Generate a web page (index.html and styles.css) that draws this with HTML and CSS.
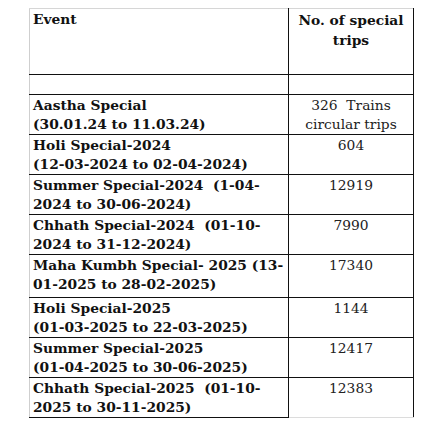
FILE: index.html
```html
<!DOCTYPE html>
<html>
<head>
<meta charset="utf-8">
<link rel="stylesheet" href="styles.css">
</head>
<body>
<table class="trips">
  <colgroup>
    <col class="c-ev">
    <col class="c-num">
  </colgroup>
  <tr class="r-head">
    <td class="ev">Event</td>
    <td class="num head">No. of special<br>trips</td>
  </tr>
  <tr class="r-empty"><td class="ev"></td><td class="num"></td></tr>
  <tr class="r-std">
    <td class="ev">Aastha Special<br>(30.01.24 to 11.03.24)</td>
    <td class="num">326&nbsp; Trains<br>circular trips</td>
  </tr>
  <tr class="r-std">
    <td class="ev">Holi Special-2024<br>(12-03-2024 to 02-04-2024)</td>
    <td class="num">604</td>
  </tr>
  <tr class="r-std">
    <td class="ev">Summer Special-2024&nbsp; (1-04-<br>2024 to 30-06-2024)</td>
    <td class="num">12919</td>
  </tr>
  <tr class="r-std">
    <td class="ev">Chhath Special-2024&nbsp; (01-10-<br>2024 to 31-12-2024)</td>
    <td class="num">7990</td>
  </tr>
  <tr class="r-tall">
    <td class="ev">Maha Kumbh Special- 2025 (13-<br>01-2025 to 28-02-2025)</td>
    <td class="num">17340</td>
  </tr>
  <tr class="r-std">
    <td class="ev">Holi Special-2025<br>(01-03-2025 to 22-03-2025)</td>
    <td class="num">1144</td>
  </tr>
  <tr class="r-std">
    <td class="ev">Summer Special-2025<br>(01-04-2025 to 30-06-2025)</td>
    <td class="num">12417</td>
  </tr>
  <tr class="r-std r-last">
    <td class="ev">Chhath Special-2025&nbsp; (01-10-<br>2025 to 30-11-2025)</td>
    <td class="num">12383</td>
  </tr>
</table>
</body>
</html>
```
FILE: styles.css
```css
html, body {
  margin: 0;
  padding: 0;
  background: #ffffff;
}
.trips {
  margin: 8px 0 0 29px;
  border-collapse: collapse;
  table-layout: fixed;
  width: 384px;
  color: #111;
  font-size: 13.8px;
  line-height: 19px;
}
.c-ev { width: 259px; }
.c-num { width: 125px; }
.trips td {
  border: 1px solid #111;
  vertical-align: top;
  padding: 0;
  overflow: hidden;
}
.trips tr:first-child td {
  border-top-color: #d6d6d6;
}
.trips td.ev {
  border-left-color: #cfcfcf;
  font-family: "DejaVu Serif", serif;
  font-weight: bold;
  padding: 1px 0 0 3px;
  white-space: nowrap;
}
.trips td.num {
  font-family: "DejaVu Serif", serif;
  font-weight: normal;
  text-align: center;
  color: #222;
  padding: 1px 0 0 0;
  white-space: nowrap;
}
.trips td.head {
  font-weight: bold;
  color: #111;
  padding: 1px 0 0 0;
  line-height: 20px;
}
.r-head { height: 66px; }
.r-empty { height: 20px; }
.r-std { height: 40px; }
.r-tall { height: 43px; }
.r-last td.num {
  border-bottom-color: #dcdcdc;
}
```
